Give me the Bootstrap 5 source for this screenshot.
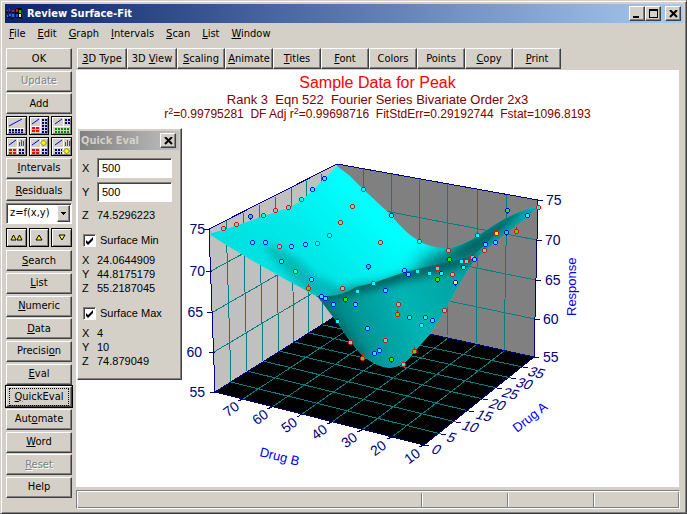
<!DOCTYPE html>
<html lang="en">
<head>
<meta charset="utf-8">
<meta name="viewport" content="width=device-width, initial-scale=1">
<title>Review Surface-Fit</title>
<link href="https://cdn.jsdelivr.net/npm/bootstrap@5.3.0/dist/css/bootstrap.min.css" rel="stylesheet">
<style>
:root{--face:#d4d0c8}
body{font:11px/14px "DejaVu Sans Condensed","Noto Sans",sans-serif;color:#000;background:var(--face)}
.win{min-height:100vh;background:var(--face);border:1px solid;border-color:var(--face) #404040 #404040 var(--face);box-shadow:inset 1px 1px #fff,inset -1px -1px #808080;padding:3px 3px 3px 4px}
.titlebar{height:19px;background:linear-gradient(90deg,#0a246a,#a6caf0);color:#fff;font-weight:700;padding:0 2px 0 1px}
.bevel{background:var(--face);border:1px solid;border-color:#fff #404040 #404040 #fff;box-shadow:inset -1px -1px #808080;border-radius:0;color:#000;padding:0;font:inherit;line-height:14px}
.bevel:hover,.bevel:focus-visible{background:var(--face);color:#000}
.cap{width:16px;height:15px;display:flex;align-items:center;justify-content:center}
.menu{padding:4px 4px 0;height:25px;gap:12px}
.menu a{color:#000;text-decoration:none}
.side{width:68px;padding:0 1px 12px 1px;margin-right:3px}
.side button{height:21px;width:100%;flex:none}
.side .bevel:disabled{color:#808080;text-shadow:1px 1px #fff;opacity:1;background:var(--face);border-color:#fff #404040 #404040 #fff}
.side .focused{outline:1px solid #000;outline-offset:0;position:relative}
.focused span{outline:1px dotted #000;padding:1px 3px;display:block;margin:0 3px}
.tri{display:grid;grid-template-columns:repeat(3,1fr);gap:2px}
.tri.arrows{margin:2px 0}
.side .tri .bevel{height:19px;border-color:#000;box-shadow:inset 1px 1px #fff,inset -1px -1px #808080;display:flex;align-items:center;justify-content:center}
.sunken{background:#fff;border:1px solid;border-color:#808080 #fff #fff #808080;box-shadow:inset 1px 1px #404040;border-radius:0;color:#000;font:inherit;line-height:14px}
.pick{appearance:none;width:100%;height:21px;padding:1px 14px 1px 3px;display:block}
.pickarrow{position:absolute;right:2px;top:2px;width:13px;height:17px;pointer-events:none;display:flex;align-items:center;justify-content:center}
.tools{display:grid;grid-template-columns:50px 50px repeat(8,48px);padding-left:1px}
.tools .bevel{height:21px;white-space:nowrap}
.main{min-width:0}
.sheet{background:#fff;margin:1px 4px 3px 0;font-family:"Liberation Sans",Arial,sans-serif;position:relative}
.heads{color:#800000;text-align:center;height:56px;padding-top:4px;font-size:12px;line-height:15px;white-space:pre}
.heads h1{font-size:16px;line-height:18px;color:#f00;margin:0;font-weight:400}
.heads .model{font-size:13px}
.heads sup{font-size:9px;top:-4px}
.plot{display:block;width:100%;flex:1 1 361px;min-height:0}
.plot text{font-size:14px;fill:#000080}
.plot .axis{font-size:13px;fill:#00f}
.grid3{stroke:#008080;fill:none;shape-rendering:crispEdges}
.edge3{stroke:#000080;fill:none;shape-rendering:crispEdges}
.dlg{position:absolute;left:1px;top:58px;width:105px;height:252px;background:var(--face);border:1px solid;border-color:#fff #404040 #404040 #fff;box-shadow:inset -1px -1px #808080;padding:2px;font-size:11px;line-height:14px}
.dlgbar{height:19px;background:linear-gradient(90deg,#808080,#c0c0c0);color:#d4d0c8;font:700 11px/14px "DejaVu Sans Condensed","Noto Sans",sans-serif;padding:0 3px 0 1px}
.fieldrow{display:grid;grid-template-columns:15px 1fr;align-items:center;padding-left:2px;padding-right:7px}
.fieldrow .sunken{height:20px;width:100%;padding:0 4px}
.fieldrow output{display:block}
.fieldrow.vals{margin-top:6px}
.tick{display:flex;align-items:center;gap:4px;padding-left:3px;margin-top:11px}
.tick input{appearance:none;width:13px;height:13px;margin:0;padding:0}
.tick input:checked{background:#fff url("data:image/svg+xml,%3Csvg xmlns='http://www.w3.org/2000/svg' viewBox='0 0 11 11'%3E%3Cpath d='M2 5l2 2 5-5v3L4 10 2 8z'/%3E%3C/svg%3E") center/11px no-repeat}
.status{display:grid;grid-template-columns:1fr 86px 86px 86px;height:19px;margin:0 3px 1px 0;border:1px solid;border-color:#808080 #fff #fff #808080;box-shadow:inset 1px 1px #fff,inset -1px -1px #808080}
.status div+div{border-left:1px solid #808080;box-shadow:inset 1px 0 #fff;margin:2px 0 1px}
</style>
</head>
<body>
<div class="win d-flex flex-column">
  <header class="titlebar d-flex align-items-center">
    <svg width="17" height="13" viewBox="0 0 17 13" shape-rendering="crispEdges"><path d="M9 2l2-1h4l1 1v10h-1V11H9z"/><path fill="#f00" d="M10 2h2v3h-2z"/><path fill="#0c0" d="M13 3h2v3h-2z"/><path fill="#24f" d="M10 7h2v3h-2z"/><path fill="#ff0" d="M13 7h2v3h-2z"/><path fill="#f00" d="M1 3h1v1H1zM3 2h1v2H3zM6 3h2v2H6z"/><path fill="#36f" d="M1 8h1v2H1zM3 7h2v2H3zM6 7h2v3H6z"/><path d="M0 5h2v1H0zM3 5h2v1H3zM6 5h2v1H6zM2 10h2v1H2zM5 11h2v1H5z"/></svg>
    <span class="flex-grow-1 ms-1">Review Surface-Fit</span>
    <button class="bevel cap" aria-label="Minimize"><svg width="10" height="9"><path d="M1 7h6v2H1z"/></svg></button>
    <button class="bevel cap" aria-label="Maximize"><svg width="9" height="9" shape-rendering="crispEdges"><path fill-rule="evenodd" d="M0 0h9v9H0zM1 2h7v6H1z"/></svg></button>
    <button class="bevel cap ms-1" aria-label="Close"><svg width="9" height="8"><path stroke="#000" stroke-width="2" d="M1 0l7 7M8 0L1 7"/></svg></button>
  </header>
  <nav class="menu d-flex"><a href="#"><u>F</u>ile</a><a href="#"><u>E</u>dit</a><a href="#"><u>G</u>raph</a><a href="#"><u>I</u>ntervals</a><a href="#"><u>S</u>can</a><a href="#"><u>L</u>ist</a><a href="#"><u>W</u>indow</a></nav>
  <div class="d-flex flex-grow-1">
    <aside class="side d-flex flex-column justify-content-between">
      <button class="bevel">OK</button>
      <button class="bevel" disabled>Update</button>
      <button class="bevel">Add</button>
      <div class="tri" id="layouts">
        <button class="bevel" aria-label="Graph over list"><svg width="16" height="15"><path stroke="#00f" d="M1 8L14 1"/><path stroke="#fff" d="M0 10.500h16"/><path stroke="#000080" stroke-width="2" stroke-dasharray="2 1" d="M1 12h14M1 14.500h14"/></svg></button>
        <button class="bevel" aria-label="Graph and two lists"><svg width="16" height="15"><path stroke="#00f" d="M1 6L8 1"/><path stroke="#fff" d="M9.500 0v15M0 8.500h9"/><path stroke="#f00" stroke-width="2" stroke-dasharray="3 1" d="M1 10h7M1 13h7"/><path stroke="#000080" stroke-width="2" stroke-dasharray="2 1" d="M11 2h5M11 5h5M11 8h5M11 11h5M11 14h5"/></svg></button>
        <button class="bevel" aria-label="Graph, list, table"><svg width="16" height="15"><path stroke="#00f" d="M1 6L8 1"/><path stroke="#fff" d="M9.500 0v9M0 8.500h16"/><path stroke="#000080" stroke-width="2" stroke-dasharray="2 1" d="M11 2h5M11 5h5"/><path stroke="#080" stroke-width="2" stroke-dasharray="2 1" d="M1 11h14M1 14h14"/></svg></button>
        <button class="bevel" aria-label="Graph and bars"><svg width="16" height="15"><path stroke="#00f" d="M1 6L8 1"/><path stroke="#fff" d="M9.500 0v15M0 8.500h16"/><path fill="#080" d="M11 3h1v4h-1zM13 1h1v6h-1zM15 2h1v5h-1z"/><path stroke="#f00" stroke-width="2" stroke-dasharray="3 1" d="M1 11h7M1 14h7"/><path stroke="#000080" stroke-width="2" stroke-dasharray="2 1" d="M11 11h5M11 14h5"/></svg></button>
        <button class="bevel" aria-label="Graph and surface"><svg width="16" height="15"><path stroke="#00f" d="M1 6L8 1"/><path stroke="#fff" d="M9.500 0v15M0 8.500h16"/><path fill="#ff0" stroke="#880" d="M12.500 1l3 3-3 3-3-3z"/><path stroke="#f00" stroke-width="2" stroke-dasharray="3 1" d="M1 11h7M1 14h7"/><path stroke="#000080" stroke-width="2" stroke-dasharray="2 1" d="M11 11h5M11 14h5"/></svg></button>
        <button class="bevel" aria-label="All views"><svg width="16" height="15"><path stroke="#00f" d="M1 6L8 1"/><path stroke="#fff" d="M9.500 0v15M0 8.500h16"/><path fill="#080" d="M11 3h1v4h-1zM13 1h1v6h-1zM15 2h1v5h-1z"/><path stroke="#000080" stroke-width="2" stroke-dasharray="2 1" d="M1 11h7M1 14h7"/><path fill="#ff0" stroke="#880" d="M12.500 9l3 3-3 3-3-3z"/></svg></button>
      </div>
      <button class="bevel"><u>I</u>ntervals</button>
      <button class="bevel"><u>R</u>esiduals</button>
      <div class="position-relative"><select class="sunken pick" aria-label="Function form"><option>z=f(x,y)</option></select><span class="bevel pickarrow"><svg width="5" height="3" shape-rendering="crispEdges"><path d="M0 0h5v1H0zM1 1h3v1H1zM2 2h1v1H2z"/></svg></span></div>
      <div class="tri arrows">
        <button class="bevel" aria-label="Fast up"><svg width="13" height="7"><path fill="#ff0" stroke="#000" d="M1 6l2.500-5L6 6zM7 6l2.500-5L12 6z"/></svg></button>
        <button class="bevel" aria-label="Up"><svg width="8" height="7"><path fill="#ff0" stroke="#000" d="M1 6l3-5 3 5z"/></svg></button>
        <button class="bevel" aria-label="Down"><svg width="8" height="7"><path fill="#ff0" stroke="#000" d="M1 1l3 5 3-5z"/></svg></button>
      </div>
      <button class="bevel"><u>S</u>earch</button>
      <button class="bevel"><u>L</u>ist</button>
      <button class="bevel"><u>N</u>umeric</button>
      <button class="bevel"><u>D</u>ata</button>
      <button class="bevel">Precisi<u>o</u>n</button>
      <button class="bevel"><u>E</u>val</button>
      <button class="bevel focused"><span><u>Q</u>uickEval</span></button>
      <button class="bevel">Aut<u>o</u>mate</button>
      <button class="bevel"><u>W</u>ord</button>
      <button class="bevel" disabled><u>R</u>eset</button>
      <button class="bevel">Help</button>
    </aside>
    <main class="main flex-grow-1 d-flex flex-column">
      <div class="tools"><button class="bevel"><u>3</u>D Type</button><button class="bevel">3D <u>V</u>iew</button><button class="bevel"><u>S</u>caling</button><button class="bevel"><u>A</u>nimate</button><button class="bevel"><u>T</u>itles</button><button class="bevel"><u>F</u>ont</button><button class="bevel">Colors</button><button class="bevel">Points</button><button class="bevel"><u>C</u>opy</button><button class="bevel"><u>P</u>rint</button></div>
      <section class="sheet flex-grow-1 d-flex flex-column">
        <div class="heads"><h1>Sample Data for Peak</h1><div class="model">Rank 3  Eqn 522  Fourier Series Bivariate Order 2x3</div><div>r<sup>2</sup>=0.99795281  DF Adj r<sup>2</sup>=0.99698716  FitStdErr=0.29192744  Fstat=1096.8193</div></div>
        <svg class="plot" viewBox="76 126 603 361" id="plot">
          <defs>
            <clipPath id="surf"><path d="M209 234L226 229 250 221 275 212 289 208 301 201 313 190 325 178 337 166 350 176 363 189 391 215 Q405 233 419 241 Q433 249 448 248 Q460 247 478 236 Q515 209 538 207 L527 217 506 233 484 251 474 260 463 278 444 312 430 334 414 352 Q404 367 392 367.500 Q378 369 361 354 L350 341 337 322 318 297 309 292 Q280 277 253 261 L228 246z"/></clipPath>
            <clipPath id="front"><path d="M316 296Q340 298 356 287L373 283 405 272 438 264 473 256 510 220 540 206 V300L450 400H350L300 300z"/></clipPath>
            <linearGradient id="sky" gradientUnits="userSpaceOnUse" x1="250" y1="290" x2="350" y2="190"><stop offset="0" stop-color="#00dede"/><stop offset=".5" stop-color="#00e8e8"/><stop offset="1" stop-color="#0ff"/></linearGradient>
            <linearGradient id="pit" gradientUnits="userSpaceOnUse" x1="335" y1="325" x2="450" y2="275"><stop offset="0" stop-color="#008080"/><stop offset=".25" stop-color="#009c9c"/><stop offset=".6" stop-color="#00b4b4"/><stop offset="1" stop-color="#00a4a4"/></linearGradient>
            <filter id="b4" x="-30%" y="-60%" width="160%" height="220%"><feGaussianBlur stdDeviation="4"/></filter>
            <filter id="b7" x="-40%" y="-60%" width="180%" height="220%"><feGaussianBlur stdDeviation="9"/></filter>
          </defs>
          <path fill="#c0c0c0" d="M209 229L337 164 339 314 215 392z"/>
          <path fill="#808080" d="M337 164L538 200 534 357 339 314z"/>
          <path d="M215 392L339 314 534 357 424 445z"/>
          <path class="grid3" d="M226 220L231 382 441 434M243 212L247 371 456 422M259 204L263 361 469 411M275 196L279 351 483 399M291 187L294 342 497 388M306 180L309 333 511 378M321 172L323 325 523 367M211 271L338 202 537 240M213 312L338 240 536 280M214 352L338 278 535 319M363 169L364 319 243 399M391 174L392 326 272 407M419 179V332L302 414M448 184L447 339 332 422M478 190L476 345 362 430M507 195L504 351 392 437"/>
          <path class="edge3" d="M204 229H209L337 164 538 200H543M209 229L215 392 339 314 534 357 538 200M215 392L424 445 534 357M206 271h6M207 312h6M209 352h6M210 392h6M537 240h5M536 280h5M535 319h5M534 357h5M243 399l-5 2M272 407l-5 2M302 414l-5 3M332 422l-5 2M362 430l-5 2M392 437l-5 2M424 445l-5 2M424 445h5M441 434h5M456 422h5M469 411h5M483 399h5M497 388h5M511 378h5M523 367h5"/>
          <g clip-path="url(#surf)">
            <path fill="url(#sky)" d="M200 150H545V375H200z"/>
            <path fill="#009494" filter="url(#b4)" d="M262 244Q285 245 314 275L340 287 316 299Q292 283 262 244z" opacity=".55"/>
            <path fill="#00a0a0" filter="url(#b4)" d="M310 302L340 287 380 281 420 267 450 258 430 290z"/>
            <path fill="#007070" filter="url(#b7)" d="M410 265L450 247 480 229 520 205 550 200 500 260 440 275z"/>
            <g clip-path="url(#front)">
              <path fill="url(#pit)" d="M300 200H545V375H300z"/>
              <path fill="none" stroke="#006060" stroke-width="12" filter="url(#b4)" d="M312 297L350 290 400 276 450 264 474 256"/>
              <path fill="none" stroke="#006a6a" stroke-width="9" filter="url(#b4)" d="M316 297L342 330 364 360"/>
            </g>
            <path fill="#006060" filter="url(#b4)" d="M445 258L470 242 505 218 520 211 512 222 490 239 470 252z"/>
            <path fill="#00a0a0" filter="url(#b4)" d="M540 208L520 222 490 249 474 262 498 240 524 216z"/>
          </g>
          <g id="points" shape-rendering="crispEdges"></g>
          <g text-anchor="end"><text x="205" y="234">75</text><text x="205" y="276">70</text><text x="203" y="317">65</text><text x="202" y="357">60</text><text x="205" y="397">55</text></g>
          <g><text x="546" y="205">75</text><text x="545" y="245">70</text><text x="545" y="285">65</text><text x="543" y="324">60</text><text x="543" y="362">55</text></g>
          <g id="ticks" text-anchor="middle"></g>
          <text class="axis" transform="translate(576 316)rotate(-90)">Response</text>
          <text class="axis" transform="translate(259 456)rotate(14)">Drug B</text>
          <text class="axis" transform="translate(517 433)rotate(-38)">Drug A</text>
        </svg>
        <div class="dlg" role="dialog" aria-label="Quick Eval">
          <div class="dlgbar d-flex align-items-center justify-content-between"><span>Quick Eval</span><button class="bevel cap" aria-label="Close Quick Eval"><svg width="9" height="8"><path stroke="#000" stroke-width="2" d="M1 0l7 7M8 0L1 7"/></svg></button></div>
          <div class="fieldrow mt-2"><label for="qx">X</label><input class="sunken" id="qx" value="500"></div>
          <div class="fieldrow mt-1"><label for="qy">Y</label><input class="sunken" id="qy" value="500"></div>
          <div class="fieldrow vals"><span>Z</span><output>74.5296223</output></div>
          <label class="tick"><input type="checkbox" class="sunken" checked>Surface Min</label>
          <div class="fieldrow vals"><span>X</span><output>24.0644909</output><span>Y</span><output>44.8175179</output><span>Z</span><output>55.2187045</output></div>
          <label class="tick"><input type="checkbox" class="sunken" checked>Surface Max</label>
          <div class="fieldrow vals"><span>X</span><output>4</output><span>Y</span><output>10</output><span>Z</span><output>74.879049</output></div>
        </div>
      </section>
      <footer class="status"><div></div><div></div><div></div><div></div></footer>
    </main>
  </div>
</div>
<script src="https://cdn.jsdelivr.net/npm/bootstrap@5.3.0/dist/js/bootstrap.bundle.min.js"></script>
<script>
const NS = 'http://www.w3.org/2000/svg';
const add = (parent, tag, attrs, text) => {
  const el = document.createElementNS(NS, tag);
  for (const k in attrs) el.setAttribute(k, attrs[k]);
  if (text !== undefined) el.textContent = text;
  parent.appendChild(el);
};
// Each series: outline colour, fill colour, stalk direction, data points
const series = [
  ['#f00', '#0ff', 0, [[223,228],[236,224],[263,215],[275,210],[288,207],[301,199],[279,246],[317,243],[329,235],[340,222],[352,206],[363,189],[380,242],[419,241],[448,250],[477,235],[484,250],[472,257],[461,261],[466,261],[437,268],[538,207],[295,271],[342,288],[357,291],[373,283],[417,271],[429,273],[452,274],[398,304],[350,342],[385,340],[421,325],[403,364],[444,310]]],
  ['#00f', '#0ff', 0, [[312,189],[324,178],[252,242],[265,242],[291,246],[305,244],[281,261],[391,215],[527,215],[485,244],[495,242],[474,259],[463,267],[404,270],[311,279],[321,296],[325,298],[333,304],[355,304],[337,321],[385,290],[408,274],[441,273],[367,328],[374,353],[379,350],[409,317],[425,317],[432,320]]],
  ['#00f', '#0f0', 4, [[250,216],[368,266],[507,210],[449,259],[506,232],[345,299],[437,279],[391,359]]],
  ['#f00', '#0f0', -4, [[516,231],[308,288],[397,314],[362,358],[414,351]]],
  ['#f00', '#ff0', -4, [[496,233]]],
  ['#00f', '#ff0', 4, [[455,282]]]
];
const pts = document.getElementById('points');
for (const [line, fill, stalk, list] of series)
  for (const [x, y] of list) {
    if (stalk) add(pts, 'path', {d: `M${x} ${y}v${stalk}`, stroke: line});
    add(pts, 'path', {d: `M${x - 1} ${y - 2}h3v1h1v3h-1v1h-3v-1h-1v-3h1z`, fill: line});
    add(pts, 'path', {d: `M${x - 1} ${y - 1}h3v3h-3z`, fill: fill});
  }
const ticks = document.getElementById('ticks');
[[70,234,413],[60,263,421],[50,292,429],[40,322,436],[30,352,444],[20,381,452],[10,415,460]]
  .forEach(([t, x, y]) => add(ticks, 'text', {transform: `translate(${x} ${y})rotate(-36)`}, t));
[[0,434,454],[5,449,442],[10,468,431],[15,482,420],[20,495,409],[25,508,398],[30,522,388],[35,534,377]]
  .forEach(([t, x, y]) => add(ticks, 'text', {transform: `translate(${x} ${y})rotate(13)skewX(-18)`}, t));
</script>
</body>
</html>
